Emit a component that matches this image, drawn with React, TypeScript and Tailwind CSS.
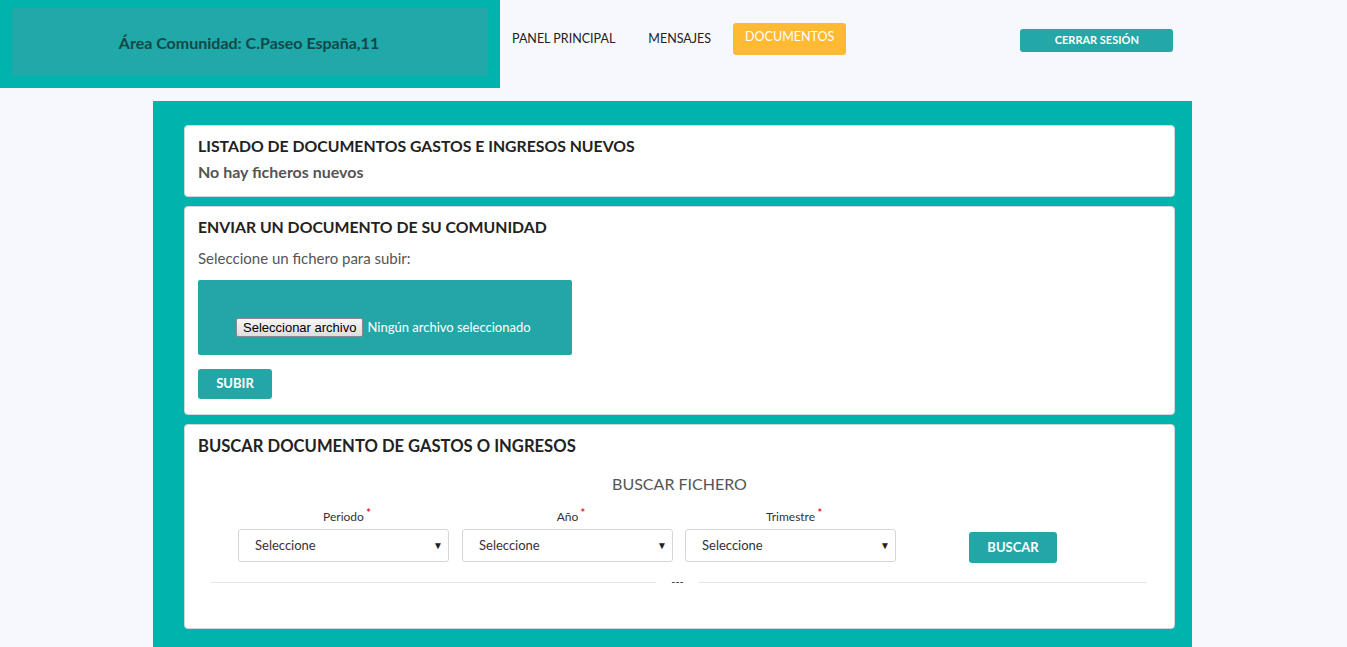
import React from "react";

const font = { fontFamily: "Lato, 'Open Sans', sans-serif" };

function Select({ label }: { label: string }) {
  return (
    <div className="flex flex-col items-center w-[211px]">
      <div className="text-[12px] text-[#333] leading-[14px] mb-[5px] relative">
        {label}
        <span className="absolute -right-[7px] -top-[4px] text-[#e0262b] text-[11px] font-bold">*</span>
      </div>
      <div className="w-full h-[33px] border border-[#d6d6d6] rounded-[3px] bg-white flex items-center justify-between pl-[16px] pr-[5px] text-[13px] text-[#333]">
        <span>Seleccione</span>
        <span className="text-[10px] text-[#222]">▼</span>
      </div>
    </div>
  );
}

export default function App() {
  return (
    <div className="min-h-[647px] bg-[#f7f8fd] overflow-hidden" style={font}>
      {/* Header */}
      <div className="flex items-start h-[88px]">
        <div className="w-[500px] h-[88px] bg-[#00b4ad] pl-[12px] pr-[12px] pt-[8px] pb-[12px]">
          <div className="w-full h-full bg-[#21a8a8] flex items-center justify-center pt-[2px]">
            <span className="text-[16px] font-bold text-[#114848] mr-[2px]">Área Comunidad: C.Paseo España,11</span>
          </div>
        </div>
        <div className="flex items-center mt-[23px] ml-[12px] h-[32px]">
          <span className="text-[12.5px] text-[#222]">PANEL PRINCIPAL</span>
          <span className="text-[12.5px] text-[#222] ml-[33px]">MENSAJES</span>
          <span className="ml-[22px] h-[32px] px-[12px] rounded-[3px] bg-[#ffba33] text-white text-[12.5px] flex items-center pb-[3px]">DOCUMENTOS</span>
        </div>
        <div className="ml-[174px] mt-[29px] w-[153px] h-[23px] rounded-[3px] bg-[#24a7a7] text-white text-[11px] font-bold flex items-center justify-center">
          CERRAR SESIÓN
        </div>
      </div>

      {/* Main */}
      <div className="mt-[13px] ml-[153px] w-[1039px] bg-[#00b4ad] pt-[24px] pl-[31px] pr-[17px] pb-[19px] flex flex-col gap-[9px]">
        {/* Card 1 */}
        <div className="bg-white rounded-[4px] border border-[#cfd8d8] h-[72px] px-[13px] pt-[10px]">
          <div className="text-[15.8px] font-bold text-[#222] leading-[20px]">LISTADO DE DOCUMENTOS GASTOS E INGRESOS NUEVOS</div>
          <div className="text-[16px] font-bold text-[#555] mt-[6px] leading-[20px]">No hay ficheros nuevos</div>
        </div>

        {/* Card 2 */}
        <div className="bg-white rounded-[4px] border border-[#cfd8d8] h-[209px] px-[13px] pt-[10px]">
          <div className="text-[15.8px] font-bold text-[#222] leading-[20px]">ENVIAR UN DOCUMENTO DE SU COMUNIDAD</div>
          <div className="text-[15px] text-[#555] mt-[11px] leading-[20px]">Seleccione un fichero para subir:</div>
          <div className="mt-[12px] w-[374px] h-[75px] bg-[#24a6a6] rounded-[2px] flex items-end pb-[18px] pl-[38px]">
            <span
              className="h-[19px] px-[6px] border border-[#8a8a8a] rounded-[2px] bg-[linear-gradient(#f6f6f6,#dedede)] text-[13px] text-black flex items-center"
              style={{ fontFamily: "Arial, 'Liberation Sans', sans-serif" }}
            >
              Seleccionar archivo
            </span>
            <span className="ml-[4px] text-[13px] text-white leading-[19px]">Ningún archivo seleccionado</span>
          </div>
          <div className="mt-[14px] w-[74px] h-[30px] bg-[#24a6a6] rounded-[3px] text-white text-[13px] font-bold flex items-center justify-center">
            SUBIR
          </div>
        </div>

        {/* Card 3 */}
        <div className="bg-white rounded-[4px] border border-[#cfd8d8] h-[205px] px-[13px] pt-[11px]">
          <div className="text-[16.6px] font-bold text-[#222] leading-[20px]">BUSCAR DOCUMENTO DE GASTOS O INGRESOS</div>
          <div className="text-center text-[16px] text-[#555] mt-[18px] leading-[20px]">BUSCAR FICHERO</div>
          <div className="flex items-end mt-[16px] ml-[40px]">
            <Select label="Periodo" />
            <div className="w-[13px]" />
            <Select label="Año" />
            <div className="w-[12px]" />
            <Select label="Trimestre" />
            <div className="ml-[73px] mb-[-1px] w-[88px] h-[31px] bg-[#24a6a6] rounded-[3px] text-white text-[13px] font-bold flex items-center justify-center">
              BUSCAR
            </div>
          </div>
          <div className="flex items-center mt-[16px] ml-[12px] w-[937px]">
            <div className="h-px bg-[#e8e8e8] w-[446px]" />
            <div className="w-[43px] text-center text-[11px] text-[#333] leading-[8px]">---</div>
            <div className="h-px bg-[#e8e8e8] flex-1" />
          </div>
        </div>
      </div>
    </div>
  );
}
